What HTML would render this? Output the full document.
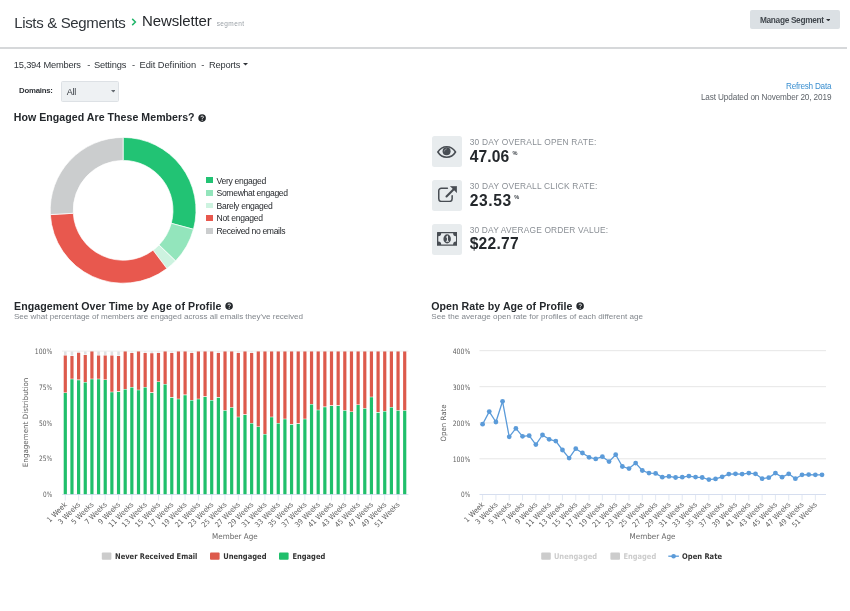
<!DOCTYPE html>
<html lang="en">
<head>
<meta charset="utf-8">
<title>Newsletter segment - engagement report</title>
<style>
html,body{margin:0;padding:0;background:#fff;}
body{width:850px;height:611px;position:relative;overflow:hidden;font-family:"Liberation Sans", sans-serif;-webkit-font-smoothing:antialiased;}
.t{position:absolute;white-space:nowrap;margin:0;padding:0;text-decoration:none;display:block;}
h2.t{font-weight:700;} sup.t{vertical-align:baseline;}
#page{position:absolute;left:0;top:0;width:850px;height:611px;will-change:transform;}
.abs{position:absolute;} .chart{position:absolute;display:block;overflow:visible;}
#btn{left:750.2px;top:10.4px;width:90px;height:18.8px;background:#dbe0e4;border-radius:2px;}
#sel{left:61.2px;top:81.2px;width:56px;height:19.2px;background:#eef1f3;border:1px solid #dde1e5;border-radius:1.5px;}
.ibox{width:30.6px;height:30.4px;left:431.6px;background:#e8ecee;border-radius:2.5px;}
.sw{width:6.4px;height:5.8px;left:206.4px;}
#t_ls{left:14.20px;top:14.12px;font-size:15.0px;line-height:18.0px;font-weight:400;color:#30353a;letter-spacing:-0.341px;}
#t_nl{left:142.00px;top:12.12px;font-size:15.0px;line-height:18.0px;font-weight:400;color:#26292d;letter-spacing:-0.118px;}
#t_seg{left:216.70px;top:20.12px;font-size:6.5px;line-height:7.8px;font-weight:400;color:#9aa0a6;letter-spacing:0.394px;}
#t_btn{left:760.00px;top:16.12px;font-size:8.3px;line-height:9.96px;font-weight:700;color:#41474d;letter-spacing:-0.327px;}
#t_mem{left:13.80px;top:60.12px;font-size:9.3px;line-height:11.16px;font-weight:400;color:#30353a;letter-spacing:-0.197px;}
#t_d1{left:87.20px;top:60.12px;font-size:9.3px;line-height:11.16px;font-weight:400;color:#30353a;letter-spacing:0.000px;}
#t_set{left:93.90px;top:60.12px;font-size:9.3px;line-height:11.16px;font-weight:400;color:#30353a;letter-spacing:-0.171px;}
#t_d2{left:131.90px;top:60.12px;font-size:9.3px;line-height:11.16px;font-weight:400;color:#30353a;letter-spacing:0.000px;}
#t_edit{left:139.50px;top:60.12px;font-size:9.3px;line-height:11.16px;font-weight:400;color:#30353a;letter-spacing:-0.055px;}
#t_d3{left:201.30px;top:60.12px;font-size:9.3px;line-height:11.16px;font-weight:400;color:#30353a;letter-spacing:0.000px;}
#t_rep{left:208.90px;top:60.12px;font-size:9.3px;line-height:11.16px;font-weight:400;color:#30353a;letter-spacing:-0.177px;}
#t_dom{left:19.00px;top:86.12px;font-size:7.8px;line-height:9.36px;font-weight:700;color:#2f3338;letter-spacing:-0.233px;}
#t_all{left:66.70px;top:87.12px;font-size:9.0px;line-height:10.8px;font-weight:400;color:#353a40;letter-spacing:-0.208px;}
#t_ref{left:786.00px;top:82.12px;font-size:8.2px;line-height:9.84px;font-weight:400;color:#3a8fd0;letter-spacing:-0.250px;}
#t_upd{left:700.90px;top:93.12px;font-size:8.2px;line-height:9.84px;font-weight:400;color:#5f646a;letter-spacing:-0.115px;}
#t_h1{left:13.80px;top:111.12px;font-size:10.6px;line-height:12.72px;font-weight:700;color:#24282c;letter-spacing:0.036px;}
#t_h2{left:14.00px;top:300.12px;font-size:10.6px;line-height:12.72px;font-weight:700;color:#24282c;letter-spacing:0.068px;}
#t_s2{left:14.00px;top:312.12px;font-size:8.1px;line-height:9.72px;font-weight:400;color:#82878d;letter-spacing:-0.035px;}
#t_h3{left:431.30px;top:300.12px;font-size:10.6px;line-height:12.72px;font-weight:700;color:#24282c;letter-spacing:0.058px;}
#t_s3{left:431.30px;top:312.12px;font-size:8.1px;line-height:9.72px;font-weight:400;color:#82878d;letter-spacing:-0.001px;}
#t_l1{left:216.50px;top:176.12px;font-size:8.6px;line-height:10.32px;font-weight:400;color:#26292d;letter-spacing:-0.295px;}
#t_l2{left:216.50px;top:188.12px;font-size:8.6px;line-height:10.32px;font-weight:400;color:#26292d;letter-spacing:-0.324px;}
#t_l3{left:216.50px;top:201.12px;font-size:8.6px;line-height:10.32px;font-weight:400;color:#26292d;letter-spacing:-0.300px;}
#t_l4{left:216.50px;top:213.12px;font-size:8.6px;line-height:10.32px;font-weight:400;color:#26292d;letter-spacing:-0.262px;}
#t_l5{left:216.50px;top:226.12px;font-size:8.6px;line-height:10.32px;font-weight:400;color:#26292d;letter-spacing:-0.353px;}
#t_k1{left:469.70px;top:137.12px;font-size:8.4px;line-height:10.08px;font-weight:400;color:#8a8f95;letter-spacing:0.226px;}
#t_v1{left:469.70px;top:148.12px;font-size:15.6px;line-height:18.72px;font-weight:700;color:#24282c;letter-spacing:0.142px;}
#t_p1{left:512.50px;top:150.12px;font-size:5.6px;line-height:6.72px;font-weight:700;color:#3d4349;letter-spacing:0.000px;}
#t_k2{left:469.70px;top:181.12px;font-size:8.4px;line-height:10.08px;font-weight:400;color:#8a8f95;letter-spacing:0.220px;}
#t_v2{left:469.70px;top:192.12px;font-size:15.6px;line-height:18.72px;font-weight:700;color:#24282c;letter-spacing:0.592px;}
#t_p2{left:514.30px;top:194.12px;font-size:5.6px;line-height:6.72px;font-weight:700;color:#3d4349;letter-spacing:0.000px;}
#t_k3{left:469.70px;top:225.12px;font-size:8.4px;line-height:10.08px;font-weight:400;color:#8a8f95;letter-spacing:0.173px;}
#t_v3{left:469.70px;top:235.12px;font-size:15.6px;line-height:18.72px;font-weight:700;color:#24282c;letter-spacing:0.259px;}
</style>
</head>
<body>
<main id="page">
<header>
<a class="t" id="t_ls" href="#">Lists &amp; Segments</a>
<svg class="abs" style="left:130.500px;top:18.300px" width="6" height="8" viewBox="0 0 6 8"><path d="M1.200 0.900L4.400 4 1.200 7.100" fill="none" stroke="#21b56a" stroke-width="1.500"/></svg>
<span class="t" id="t_nl">Newsletter</span>
<small class="t" id="t_seg">segment</small>
<div class="abs" id="btn"></div>
<span class="t" id="t_btn">Manage Segment</span>
<svg class="abs" style="left:825.9px;top:18.5px" width="4.6" height="2.4" viewBox="0 0 10 5"><path d="M0 0h10L5 5z" fill="#2f3338"/></svg>
<svg class="abs" id="rule" style="left:0;top:44px" width="850" height="8" viewBox="0 44 850 8"><path d="M0 48H847" stroke="#c9cbce" stroke-width="1.7" fill="none"/></svg>
</header>
<nav>
<a class="t" id="t_mem" href="#">15,394 Members</a>
<span class="t" id="t_d1">-</span>
<a class="t" id="t_set" href="#">Settings</a>
<span class="t" id="t_d2">-</span>
<a class="t" id="t_edit" href="#">Edit Definition</a>
<span class="t" id="t_d3">-</span>
<a class="t" id="t_rep" href="#">Reports</a>
<svg class="abs" style="left:242.9px;top:63.4px" width="5.1" height="2.6" viewBox="0 0 10 5"><path d="M0 0h10L5 5z" fill="#2f3338"/></svg>
</nav>
<div class="filters">
<label class="t" id="t_dom">Domains:</label>
<div class="abs" id="sel"></div>
<span class="t" id="t_all">All</span>
<svg class="abs" style="left:110.6px;top:90.2px" width="4.6" height="2.5" viewBox="0 0 10 5"><path d="M0 0h10L5 5z" fill="#666c72"/></svg>
<a class="t" id="t_ref" href="#">Refresh Data</a>
<span class="t" id="t_upd">Last Updated on November 20, 2019</span>
</div>
<section id="engaged">
<h2 class="t" id="t_h1">How Engaged Are These Members?</h2>
<span class="abs" style="left:197.8px;top:113.7px;line-height:0"><svg viewBox="0 0 8 8" width="8.2" height="8.2"><circle cx="4" cy="4" r="3.700" fill="#24282c"/><path d="M2.900 3.100a1.150 1.150 0 1 1 1.700 1c-.4.200-.55.400-.55.800" fill="none" stroke="#fff" stroke-width="0.900"/><circle cx="4.050" cy="6" r="0.550" fill="#fff"/></svg></span>
<svg class="chart" id="engagement-donut" style="left:40px;top:130px" width="170" height="162" viewBox="40 130 170 162" role="img" aria-label="Engagement breakdown">
<path d="M123.10 137.40A72.9 72.9 0 0 1 193.48 229.29L171.28 223.30A49.9 49.9 0 0 0 123.10 160.40Z" fill="#22c374" stroke="#fff" stroke-width="0.7" stroke-linejoin="round"/>
<path d="M193.48 229.29A72.9 72.9 0 0 1 175.54 260.94L159.00 244.96A49.9 49.9 0 0 0 171.28 223.30Z" fill="#93e5bc" stroke="#fff" stroke-width="0.7" stroke-linejoin="round"/>
<path d="M175.54 260.94A72.9 72.9 0 0 1 166.87 268.60L153.06 250.20A49.9 49.9 0 0 0 159.00 244.96Z" fill="#cdf3e0" stroke="#fff" stroke-width="0.7" stroke-linejoin="round"/>
<path d="M166.87 268.60A72.9 72.9 0 0 1 50.33 214.62L73.29 213.26A49.9 49.9 0 0 0 153.06 250.20Z" fill="#e8584e" stroke="#fff" stroke-width="0.7" stroke-linejoin="round"/>
<path d="M50.33 214.62A72.9 72.9 0 0 1 123.10 137.40L123.10 160.40A49.9 49.9 0 0 0 73.29 213.26Z" fill="#cbcdce" stroke="#fff" stroke-width="0.7" stroke-linejoin="round"/>
</svg>
<ul style="list-style:none;margin:0;padding:0">
<li><i class="abs sw" style="top:177.3px;background:#22c374"></i><span class="t" id="t_l1">Very engaged</span></li>
<li><i class="abs sw" style="top:189.95px;background:#93e5bc"></i><span class="t" id="t_l2">Somewhat engaged</span></li>
<li><i class="abs sw" style="top:202.6px;background:#cdf3e0"></i><span class="t" id="t_l3">Barely engaged</span></li>
<li><i class="abs sw" style="top:215.25px;background:#e8584e"></i><span class="t" id="t_l4">Not engaged</span></li>
<li><i class="abs sw" style="top:227.9px;background:#cbcdce"></i><span class="t" id="t_l5">Received no emails</span></li>
</ul></section>
<section id="stats">
<div class="abs ibox" style="top:136.3px"></div><svg class="abs" style="left:437.4px;top:145.8px" viewBox="0 0 19.4 12" width="19.4" height="12"><path d="M0.850 6C3.100 2.400 6.100 0.800 9.700 0.800s6.600 1.600 8.850 5.200c-2.250 3.600-5.250 5.200-8.850 5.200S3.100 9.600 0.850 6z" fill="none" stroke="#484d53" stroke-width="1.550" stroke-linejoin="round"/><circle cx="9.600" cy="5.300" r="4" fill="#484d53"/><path d="M7.300 5.100a2.400 2.400 0 0 1 2.200-2.300" fill="none" stroke="#8d9297" stroke-width="0.900" stroke-linecap="round"/></svg>
<span class="t" id="t_k1">30 DAY OVERALL OPEN RATE:</span>
<strong class="t" id="t_v1">47.06</strong>
<sup class="t" id="t_p1">%</sup>
<div class="abs ibox" style="top:180.3px"></div><svg class="abs" style="left:437.7px;top:185.6px" viewBox="0 0 19 16.2" width="19" height="16.2"><path d="M9.400 2.250H3.350A2.600 2.600 0 0 0 0.750 4.850V12.850A2.600 2.600 0 0 0 3.350 15.450H11.550A2.600 2.600 0 0 0 14.150 12.850V9.800" fill="none" stroke="#484d53" stroke-width="1.500" stroke-linecap="round"/><path d="M8.500 10.400L16.500 2.400" stroke="#484d53" stroke-width="2.1" stroke-linecap="round"/><path d="M12.300 0.200H18.800V6.700z" fill="#484d53" stroke="#484d53" stroke-width="0.400" stroke-linejoin="round"/></svg>
<span class="t" id="t_k2">30 DAY OVERALL CLICK RATE:</span>
<strong class="t" id="t_v2">23.53</strong>
<sup class="t" id="t_p2">%</sup>
<div class="abs ibox" style="top:224.3px"></div><svg class="abs" style="left:436.9px;top:232px" viewBox="0 0 20.3 13.8" width="20.3" height="13.8"><path fill-rule="evenodd" fill="#484d53" d="M0.400 0H19.900a.4.400 0 0 1 .4.400V13.400a.4.400 0 0 1-.4.400H0.400a.4.400 0 0 1-.4-.4V0.400A.4.400 0 0 1 .4 0zM4.200 1.300A2.900 2.900 0 0 1 1.300 4.200V9.600A2.900 2.900 0 0 1 4.200 12.500H16.100A2.900 2.900 0 0 1 19 9.600V4.200A2.900 2.900 0 0 1 16.100 1.300z"/><ellipse cx="10.150" cy="6.900" rx="3.750" ry="4.550" fill="#484d53"/><path d="M9.100 5.300l1.350-1v4.600M8.900 9.300h3" fill="none" stroke="#e8ecee" stroke-width="1.050"/></svg>
<span class="t" id="t_k3">30 DAY AVERAGE ORDER VALUE:</span>
<strong class="t" id="t_v3">$22.77</strong>
</section>
<section id="engagement-over-time">
<h2 class="t" id="t_h2">Engagement Over Time by Age of Profile</h2>
<span class="abs" style="left:224.5px;top:302.4px;line-height:0"><svg viewBox="0 0 8 8" width="8.2" height="8.2"><circle cx="4" cy="4" r="3.700" fill="#24282c"/><path d="M2.900 3.100a1.150 1.150 0 1 1 1.700 1c-.4.200-.55.400-.55.800" fill="none" stroke="#fff" stroke-width="0.900"/><circle cx="4.050" cy="6" r="0.550" fill="#fff"/></svg></span>
<p class="t" id="t_s2">See what percentage of members are engaged across all emails they've received</p>
<svg class="chart" id="engagement-chart" style="left:0;top:338px" width="425" height="236" viewBox="0 338 425 236" role="img" aria-label="Engagement over time by age of profile">
<g font-family='"DejaVu Sans", "Liberation Sans", sans-serif'>
<path d="M62 351.1H408.5" stroke="#e6e6e6" stroke-width="0.7" fill="none"/>
<text x="52.20" y="497.00" font-size="7.4" fill="#5f5f5f" text-anchor="end" textLength="9.1" lengthAdjust="spacingAndGlyphs">0%</text>
<text x="52.20" y="461.00" font-size="7.4" fill="#5f5f5f" text-anchor="end" textLength="13.2" lengthAdjust="spacingAndGlyphs">25%</text>
<text x="52.20" y="426.00" font-size="7.4" fill="#5f5f5f" text-anchor="end" textLength="13.2" lengthAdjust="spacingAndGlyphs">50%</text>
<text x="52.20" y="390.00" font-size="7.4" fill="#5f5f5f" text-anchor="end" textLength="13.2" lengthAdjust="spacingAndGlyphs">75%</text>
<text x="52.20" y="354.00" font-size="7.4" fill="#5f5f5f" text-anchor="end" textLength="17.4" lengthAdjust="spacingAndGlyphs">100%</text>
<text x="27.90" y="422.40" font-size="7.3" fill="#5f5f5f" text-anchor="middle" textLength="89.5" lengthAdjust="spacingAndGlyphs" transform="rotate(-90 27.90 422.40)">Engagement Distribution</text>
<path class="s-never" fill="#dfe0e1" d="M64.00 355.1V351.40000000000003h2.6V355.1zM70.66 355.6V351.40000000000003h2.6V355.6zM77.31 352.2V351.40000000000003h2.6V352.2zM83.97 354.6V351.40000000000003h2.6V354.6zM90.62 351.0V351.40000000000003h2.6V351.0zM97.27 355.1V351.40000000000003h2.6V355.1zM103.93 355.1V351.40000000000003h2.6V355.1zM110.58 355.1V351.40000000000003h2.6V355.1zM117.24 355.6V351.40000000000003h2.6V355.6zM123.89 351.0V351.40000000000003h2.6V351.0zM130.55 352.4V351.40000000000003h2.6V352.4zM137.21 351.0V351.40000000000003h2.6V351.0zM143.86 352.4V351.40000000000003h2.6V352.4zM150.52 352.7V351.40000000000003h2.6V352.7zM157.17 352.4V351.40000000000003h2.6V352.4zM163.83 351.0V351.40000000000003h2.6V351.0zM170.48 352.4V351.40000000000003h2.6V352.4zM177.14 351.0V351.40000000000003h2.6V351.0zM183.79 351.0V351.40000000000003h2.6V351.0zM190.45 352.4V351.40000000000003h2.6V352.4zM197.10 351.0V351.40000000000003h2.6V351.0zM203.76 351.0V351.40000000000003h2.6V351.0zM210.41 351.0V351.40000000000003h2.6V351.0zM217.07 352.4V351.40000000000003h2.6V352.4zM223.72 351.0V351.40000000000003h2.6V351.0zM230.38 351.0V351.40000000000003h2.6V351.0zM237.03 352.4V351.40000000000003h2.6V352.4zM243.69 351.0V351.40000000000003h2.6V351.0zM250.34 352.4V351.40000000000003h2.6V352.4zM257.00 351.0V351.40000000000003h2.6V351.0zM263.65 351.0V351.40000000000003h2.6V351.0zM270.31 351.0V351.40000000000003h2.6V351.0zM276.96 351.0V351.40000000000003h2.6V351.0zM283.62 351.0V351.40000000000003h2.6V351.0zM290.27 351.0V351.40000000000003h2.6V351.0zM296.93 351.0V351.40000000000003h2.6V351.0zM303.58 351.0V351.40000000000003h2.6V351.0zM310.24 351.0V351.40000000000003h2.6V351.0zM316.89 351.0V351.40000000000003h2.6V351.0zM323.55 351.0V351.40000000000003h2.6V351.0zM330.20 351.0V351.40000000000003h2.6V351.0zM336.86 351.0V351.40000000000003h2.6V351.0zM343.51 351.0V351.40000000000003h2.6V351.0zM350.17 351.0V351.40000000000003h2.6V351.0zM356.82 351.0V351.40000000000003h2.6V351.0zM363.48 351.0V351.40000000000003h2.6V351.0zM370.13 351.0V351.40000000000003h2.6V351.0zM376.79 351.0V351.40000000000003h2.6V351.0zM383.44 351.0V351.40000000000003h2.6V351.0zM390.10 351.0V351.40000000000003h2.6V351.0zM396.75 351.0V351.40000000000003h2.6V351.0zM403.41 351.0V351.40000000000003h2.6V351.0z"/>
<path class="s-unengaged" fill="#dd5a4c" d="M63.70 392.5V355.6h3.2V392.5zM70.36 378.7V356.1h3.2V378.7zM77.01 379.6V352.7h3.2V379.6zM83.67 382.0V355.1h3.2V382.0zM90.32 378.7V351.5h3.2V378.7zM96.97 378.7V355.6h3.2V378.7zM103.63 379.4V355.6h3.2V379.4zM110.28 391.7V355.6h3.2V391.7zM116.94 391.3V356.1h3.2V391.3zM123.59 388.9V351.5h3.2V388.9zM130.25 386.9V352.9h3.2V386.9zM136.91 389.7V351.5h3.2V389.7zM143.56 386.9V352.9h3.2V386.9zM150.22 392.3V353.2h3.2V392.3zM156.87 381.5V352.9h3.2V381.5zM163.53 384.0V351.5h3.2V384.0zM170.18 397.1V352.9h3.2V397.1zM176.84 398.7V351.5h3.2V398.7zM183.49 394.6V351.5h3.2V394.6zM190.15 400.0V352.9h3.2V400.0zM196.80 398.7V351.5h3.2V398.7zM203.46 396.3V351.5h3.2V396.3zM210.11 400.0V351.5h3.2V400.0zM216.77 397.1V352.9h3.2V397.1zM223.42 410.2V351.5h3.2V410.2zM230.08 407.2V351.5h3.2V407.2zM236.73 416.7V352.9h3.2V416.7zM243.39 414.3V351.5h3.2V414.3zM250.04 422.9V352.9h3.2V422.9zM256.69 426.5V351.5h3.2V426.5zM263.35 433.9V351.5h3.2V433.9zM270.00 416.7V351.5h3.2V416.7zM276.66 422.9V351.5h3.2V422.9zM283.31 418.7V351.5h3.2V418.7zM289.97 424.1V351.5h3.2V424.1zM296.62 423.3V351.5h3.2V423.3zM303.28 418.7V351.5h3.2V418.7zM309.94 403.9V351.5h3.2V403.9zM316.59 409.7V351.5h3.2V409.7zM323.25 406.6V351.5h3.2V406.6zM329.90 405.3V351.5h3.2V405.3zM336.56 405.3V351.5h3.2V405.3zM343.21 410.2V351.5h3.2V410.2zM349.87 411.5V351.5h3.2V411.5zM356.52 404.4V351.5h3.2V404.4zM363.18 408.2V351.5h3.2V408.2zM369.83 396.7V351.5h3.2V396.7zM376.49 412.1V351.5h3.2V412.1zM383.14 411.0V351.5h3.2V411.0zM389.80 406.9V351.5h3.2V406.9zM396.45 410.2V351.5h3.2V410.2zM403.11 410.2V351.5h3.2V410.2z"/>
<path class="s-engaged" fill="#20bf6b" d="M63.70 494.5V393.1h3.2V494.5zM70.36 494.5V379.3h3.2V494.5zM77.01 494.5V380.2h3.2V494.5zM83.67 494.5V382.6h3.2V494.5zM90.32 494.5V379.3h3.2V494.5zM96.97 494.5V379.3h3.2V494.5zM103.63 494.5V380.0h3.2V494.5zM110.28 494.5V392.3h3.2V494.5zM116.94 494.5V391.9h3.2V494.5zM123.59 494.5V389.5h3.2V494.5zM130.25 494.5V387.5h3.2V494.5zM136.91 494.5V390.3h3.2V494.5zM143.56 494.5V387.5h3.2V494.5zM150.22 494.5V392.9h3.2V494.5zM156.87 494.5V382.1h3.2V494.5zM163.53 494.5V384.6h3.2V494.5zM170.18 494.5V397.7h3.2V494.5zM176.84 494.5V399.3h3.2V494.5zM183.49 494.5V395.2h3.2V494.5zM190.15 494.5V400.6h3.2V494.5zM196.80 494.5V399.3h3.2V494.5zM203.46 494.5V396.9h3.2V494.5zM210.11 494.5V400.6h3.2V494.5zM216.77 494.5V397.7h3.2V494.5zM223.42 494.5V410.8h3.2V494.5zM230.08 494.5V407.8h3.2V494.5zM236.73 494.5V417.3h3.2V494.5zM243.39 494.5V414.9h3.2V494.5zM250.04 494.5V423.5h3.2V494.5zM256.69 494.5V427.1h3.2V494.5zM263.35 494.5V434.5h3.2V494.5zM270.00 494.5V417.3h3.2V494.5zM276.66 494.5V423.5h3.2V494.5zM283.31 494.5V419.3h3.2V494.5zM289.97 494.5V424.7h3.2V494.5zM296.62 494.5V423.9h3.2V494.5zM303.28 494.5V419.3h3.2V494.5zM309.94 494.5V404.5h3.2V494.5zM316.59 494.5V410.3h3.2V494.5zM323.25 494.5V407.2h3.2V494.5zM329.90 494.5V405.9h3.2V494.5zM336.56 494.5V405.9h3.2V494.5zM343.21 494.5V410.8h3.2V494.5zM349.87 494.5V412.1h3.2V494.5zM356.52 494.5V405.0h3.2V494.5zM363.18 494.5V408.8h3.2V494.5zM369.83 494.5V397.3h3.2V494.5zM376.49 494.5V412.7h3.2V494.5zM383.14 494.5V411.6h3.2V494.5zM389.80 494.5V407.5h3.2V494.5zM396.45 494.5V410.8h3.2V494.5zM403.11 494.5V410.8h3.2V494.5z"/>
<path d="M62 494.5H408.5" stroke="#ccd6eb" stroke-width="0.7" fill="none"/>
<path d="M65.30 494.5v6M78.61 494.5v6M91.92 494.5v6M105.23 494.5v6M118.54 494.5v6M131.85 494.5v6M145.16 494.5v6M158.47 494.5v6M171.78 494.5v6M185.09 494.5v6M198.40 494.5v6M211.71 494.5v6M225.02 494.5v6M238.33 494.5v6M251.64 494.5v6M264.95 494.5v6M278.26 494.5v6M291.57 494.5v6M304.88 494.5v6M318.19 494.5v6M331.50 494.5v6M344.81 494.5v6M358.12 494.5v6M371.43 494.5v6M384.74 494.5v6M398.05 494.5v6" stroke="#d6deee" stroke-width="0.7" fill="none"/>
<text x="67.50" y="505.00" font-size="7.3" fill="#5f5f5f" text-anchor="end" textLength="25.0" lengthAdjust="spacingAndGlyphs" transform="rotate(-45 67.50 505.00)">1 Week</text>
<text x="80.81" y="505.00" font-size="7.3" fill="#5f5f5f" text-anchor="end" textLength="28.0" lengthAdjust="spacingAndGlyphs" transform="rotate(-45 80.81 505.00)">3 Weeks</text>
<text x="94.12" y="505.00" font-size="7.3" fill="#5f5f5f" text-anchor="end" textLength="28.0" lengthAdjust="spacingAndGlyphs" transform="rotate(-45 94.12 505.00)">5 Weeks</text>
<text x="107.43" y="505.00" font-size="7.3" fill="#5f5f5f" text-anchor="end" textLength="28.0" lengthAdjust="spacingAndGlyphs" transform="rotate(-45 107.43 505.00)">7 Weeks</text>
<text x="120.74" y="505.00" font-size="7.3" fill="#5f5f5f" text-anchor="end" textLength="28.0" lengthAdjust="spacingAndGlyphs" transform="rotate(-45 120.74 505.00)">9 Weeks</text>
<text x="134.05" y="505.00" font-size="7.3" fill="#5f5f5f" text-anchor="end" textLength="32.0" lengthAdjust="spacingAndGlyphs" transform="rotate(-45 134.05 505.00)">11 Weeks</text>
<text x="147.36" y="505.00" font-size="7.3" fill="#5f5f5f" text-anchor="end" textLength="32.0" lengthAdjust="spacingAndGlyphs" transform="rotate(-45 147.36 505.00)">13 Weeks</text>
<text x="160.67" y="505.00" font-size="7.3" fill="#5f5f5f" text-anchor="end" textLength="32.0" lengthAdjust="spacingAndGlyphs" transform="rotate(-45 160.67 505.00)">15 Weeks</text>
<text x="173.98" y="505.00" font-size="7.3" fill="#5f5f5f" text-anchor="end" textLength="32.0" lengthAdjust="spacingAndGlyphs" transform="rotate(-45 173.98 505.00)">17 Weeks</text>
<text x="187.29" y="505.00" font-size="7.3" fill="#5f5f5f" text-anchor="end" textLength="32.0" lengthAdjust="spacingAndGlyphs" transform="rotate(-45 187.29 505.00)">19 Weeks</text>
<text x="200.60" y="505.00" font-size="7.3" fill="#5f5f5f" text-anchor="end" textLength="32.0" lengthAdjust="spacingAndGlyphs" transform="rotate(-45 200.60 505.00)">21 Weeks</text>
<text x="213.91" y="505.00" font-size="7.3" fill="#5f5f5f" text-anchor="end" textLength="32.0" lengthAdjust="spacingAndGlyphs" transform="rotate(-45 213.91 505.00)">23 Weeks</text>
<text x="227.22" y="505.00" font-size="7.3" fill="#5f5f5f" text-anchor="end" textLength="32.0" lengthAdjust="spacingAndGlyphs" transform="rotate(-45 227.22 505.00)">25 Weeks</text>
<text x="240.53" y="505.00" font-size="7.3" fill="#5f5f5f" text-anchor="end" textLength="32.0" lengthAdjust="spacingAndGlyphs" transform="rotate(-45 240.53 505.00)">27 Weeks</text>
<text x="253.84" y="505.00" font-size="7.3" fill="#5f5f5f" text-anchor="end" textLength="32.0" lengthAdjust="spacingAndGlyphs" transform="rotate(-45 253.84 505.00)">29 Weeks</text>
<text x="267.15" y="505.00" font-size="7.3" fill="#5f5f5f" text-anchor="end" textLength="32.0" lengthAdjust="spacingAndGlyphs" transform="rotate(-45 267.15 505.00)">31 Weeks</text>
<text x="280.46" y="505.00" font-size="7.3" fill="#5f5f5f" text-anchor="end" textLength="32.0" lengthAdjust="spacingAndGlyphs" transform="rotate(-45 280.46 505.00)">33 Weeks</text>
<text x="293.77" y="505.00" font-size="7.3" fill="#5f5f5f" text-anchor="end" textLength="32.0" lengthAdjust="spacingAndGlyphs" transform="rotate(-45 293.77 505.00)">35 Weeks</text>
<text x="307.08" y="505.00" font-size="7.3" fill="#5f5f5f" text-anchor="end" textLength="32.0" lengthAdjust="spacingAndGlyphs" transform="rotate(-45 307.08 505.00)">37 Weeks</text>
<text x="320.39" y="505.00" font-size="7.3" fill="#5f5f5f" text-anchor="end" textLength="32.0" lengthAdjust="spacingAndGlyphs" transform="rotate(-45 320.39 505.00)">39 Weeks</text>
<text x="333.70" y="505.00" font-size="7.3" fill="#5f5f5f" text-anchor="end" textLength="32.0" lengthAdjust="spacingAndGlyphs" transform="rotate(-45 333.70 505.00)">41 Weeks</text>
<text x="347.01" y="505.00" font-size="7.3" fill="#5f5f5f" text-anchor="end" textLength="32.0" lengthAdjust="spacingAndGlyphs" transform="rotate(-45 347.01 505.00)">43 Weeks</text>
<text x="360.32" y="505.00" font-size="7.3" fill="#5f5f5f" text-anchor="end" textLength="32.0" lengthAdjust="spacingAndGlyphs" transform="rotate(-45 360.32 505.00)">45 Weeks</text>
<text x="373.63" y="505.00" font-size="7.3" fill="#5f5f5f" text-anchor="end" textLength="32.0" lengthAdjust="spacingAndGlyphs" transform="rotate(-45 373.63 505.00)">47 Weeks</text>
<text x="386.94" y="505.00" font-size="7.3" fill="#5f5f5f" text-anchor="end" textLength="32.0" lengthAdjust="spacingAndGlyphs" transform="rotate(-45 386.94 505.00)">49 Weeks</text>
<text x="400.25" y="505.00" font-size="7.3" fill="#5f5f5f" text-anchor="end" textLength="32.0" lengthAdjust="spacingAndGlyphs" transform="rotate(-45 400.25 505.00)">51 Weeks</text>
<text x="234.90" y="538.90" font-size="7.8" fill="#666" text-anchor="middle" textLength="45.7" lengthAdjust="spacingAndGlyphs">Member Age</text>
<rect x="101.8" y="552.4" width="9.6" height="7.4" rx="1" fill="#cccccc"/>
<text x="115.00" y="559.00" font-size="7.8" fill="#333" font-weight="700" textLength="82.4" lengthAdjust="spacingAndGlyphs">Never Received Email</text>
<rect x="210.0" y="552.4" width="9.6" height="7.4" rx="1" fill="#dd5a4c"/>
<text x="223.20" y="559.00" font-size="7.8" fill="#333" font-weight="700" textLength="43.3" lengthAdjust="spacingAndGlyphs">Unengaged</text>
<rect x="279.0" y="552.4" width="9.6" height="7.4" rx="1" fill="#20bf6b"/>
<text x="292.40" y="559.00" font-size="7.8" fill="#333" font-weight="700" textLength="32.9" lengthAdjust="spacingAndGlyphs">Engaged</text>
</g></svg>
</section>
<section id="open-rate">
<h2 class="t" id="t_h3">Open Rate by Age of Profile</h2>
<span class="abs" style="left:575.75px;top:302.4px;line-height:0"><svg viewBox="0 0 8 8" width="8.2" height="8.2"><circle cx="4" cy="4" r="3.700" fill="#24282c"/><path d="M2.900 3.100a1.150 1.150 0 1 1 1.700 1c-.4.200-.55.400-.55.800" fill="none" stroke="#fff" stroke-width="0.900"/><circle cx="4.050" cy="6" r="0.550" fill="#fff"/></svg></span>
<p class="t" id="t_s3">See the average open rate for profiles of each different age</p>
<svg class="chart" id="openrate-chart" style="left:425px;top:338px" width="425" height="236" viewBox="425 338 425 236" role="img" aria-label="Open rate by age of profile">
<g font-family='"DejaVu Sans", "Liberation Sans", sans-serif'>
<path d="M479.5 350.7H826M479.5 386.7H826M479.5 422.9H826M479.5 458.8H826" stroke="#e6e6e6" stroke-width="1" fill="none"/>
<text x="470.30" y="354.00" font-size="7.4" fill="#5f5f5f" text-anchor="end" textLength="17.6" lengthAdjust="spacingAndGlyphs">400%</text>
<text x="470.30" y="390.00" font-size="7.4" fill="#5f5f5f" text-anchor="end" textLength="17.6" lengthAdjust="spacingAndGlyphs">300%</text>
<text x="470.30" y="426.00" font-size="7.4" fill="#5f5f5f" text-anchor="end" textLength="17.6" lengthAdjust="spacingAndGlyphs">200%</text>
<text x="470.30" y="462.00" font-size="7.4" fill="#5f5f5f" text-anchor="end" textLength="17.6" lengthAdjust="spacingAndGlyphs">100%</text>
<text x="470.30" y="497.00" font-size="7.4" fill="#5f5f5f" text-anchor="end" textLength="9.2" lengthAdjust="spacingAndGlyphs">0%</text>
<text x="445.90" y="423.00" font-size="7.3" fill="#5f5f5f" text-anchor="middle" textLength="37.0" lengthAdjust="spacingAndGlyphs" transform="rotate(-90 445.90 423.00)">Open Rate</text>
<path d="M479.5 494.5H826" stroke="#ccd6eb" stroke-width="0.8" fill="none"/>
<path d="M482.60 494.5v6M495.91 494.5v6M509.22 494.5v6M522.53 494.5v6M535.84 494.5v6M549.15 494.5v6M562.46 494.5v6M575.77 494.5v6M589.08 494.5v6M602.39 494.5v6M615.70 494.5v6M629.01 494.5v6M642.32 494.5v6M655.63 494.5v6M668.94 494.5v6M682.25 494.5v6M695.56 494.5v6M708.87 494.5v6M722.18 494.5v6M735.49 494.5v6M748.80 494.5v6M762.11 494.5v6M775.42 494.5v6M788.73 494.5v6M802.04 494.5v6M815.35 494.5v6" stroke="#d6deee" stroke-width="0.7" fill="none"/>
<text x="484.80" y="505.00" font-size="7.3" fill="#5f5f5f" text-anchor="end" textLength="25.0" lengthAdjust="spacingAndGlyphs" transform="rotate(-45 484.80 505.00)">1 Week</text>
<text x="498.11" y="505.00" font-size="7.3" fill="#5f5f5f" text-anchor="end" textLength="28.0" lengthAdjust="spacingAndGlyphs" transform="rotate(-45 498.11 505.00)">3 Weeks</text>
<text x="511.42" y="505.00" font-size="7.3" fill="#5f5f5f" text-anchor="end" textLength="28.0" lengthAdjust="spacingAndGlyphs" transform="rotate(-45 511.42 505.00)">5 Weeks</text>
<text x="524.73" y="505.00" font-size="7.3" fill="#5f5f5f" text-anchor="end" textLength="28.0" lengthAdjust="spacingAndGlyphs" transform="rotate(-45 524.73 505.00)">7 Weeks</text>
<text x="538.04" y="505.00" font-size="7.3" fill="#5f5f5f" text-anchor="end" textLength="28.0" lengthAdjust="spacingAndGlyphs" transform="rotate(-45 538.04 505.00)">9 Weeks</text>
<text x="551.35" y="505.00" font-size="7.3" fill="#5f5f5f" text-anchor="end" textLength="32.0" lengthAdjust="spacingAndGlyphs" transform="rotate(-45 551.35 505.00)">11 Weeks</text>
<text x="564.66" y="505.00" font-size="7.3" fill="#5f5f5f" text-anchor="end" textLength="32.0" lengthAdjust="spacingAndGlyphs" transform="rotate(-45 564.66 505.00)">13 Weeks</text>
<text x="577.97" y="505.00" font-size="7.3" fill="#5f5f5f" text-anchor="end" textLength="32.0" lengthAdjust="spacingAndGlyphs" transform="rotate(-45 577.97 505.00)">15 Weeks</text>
<text x="591.28" y="505.00" font-size="7.3" fill="#5f5f5f" text-anchor="end" textLength="32.0" lengthAdjust="spacingAndGlyphs" transform="rotate(-45 591.28 505.00)">17 Weeks</text>
<text x="604.59" y="505.00" font-size="7.3" fill="#5f5f5f" text-anchor="end" textLength="32.0" lengthAdjust="spacingAndGlyphs" transform="rotate(-45 604.59 505.00)">19 Weeks</text>
<text x="617.90" y="505.00" font-size="7.3" fill="#5f5f5f" text-anchor="end" textLength="32.0" lengthAdjust="spacingAndGlyphs" transform="rotate(-45 617.90 505.00)">21 Weeks</text>
<text x="631.21" y="505.00" font-size="7.3" fill="#5f5f5f" text-anchor="end" textLength="32.0" lengthAdjust="spacingAndGlyphs" transform="rotate(-45 631.21 505.00)">23 Weeks</text>
<text x="644.52" y="505.00" font-size="7.3" fill="#5f5f5f" text-anchor="end" textLength="32.0" lengthAdjust="spacingAndGlyphs" transform="rotate(-45 644.52 505.00)">25 Weeks</text>
<text x="657.83" y="505.00" font-size="7.3" fill="#5f5f5f" text-anchor="end" textLength="32.0" lengthAdjust="spacingAndGlyphs" transform="rotate(-45 657.83 505.00)">27 Weeks</text>
<text x="671.14" y="505.00" font-size="7.3" fill="#5f5f5f" text-anchor="end" textLength="32.0" lengthAdjust="spacingAndGlyphs" transform="rotate(-45 671.14 505.00)">29 Weeks</text>
<text x="684.45" y="505.00" font-size="7.3" fill="#5f5f5f" text-anchor="end" textLength="32.0" lengthAdjust="spacingAndGlyphs" transform="rotate(-45 684.45 505.00)">31 Weeks</text>
<text x="697.76" y="505.00" font-size="7.3" fill="#5f5f5f" text-anchor="end" textLength="32.0" lengthAdjust="spacingAndGlyphs" transform="rotate(-45 697.76 505.00)">33 Weeks</text>
<text x="711.07" y="505.00" font-size="7.3" fill="#5f5f5f" text-anchor="end" textLength="32.0" lengthAdjust="spacingAndGlyphs" transform="rotate(-45 711.07 505.00)">35 Weeks</text>
<text x="724.38" y="505.00" font-size="7.3" fill="#5f5f5f" text-anchor="end" textLength="32.0" lengthAdjust="spacingAndGlyphs" transform="rotate(-45 724.38 505.00)">37 Weeks</text>
<text x="737.69" y="505.00" font-size="7.3" fill="#5f5f5f" text-anchor="end" textLength="32.0" lengthAdjust="spacingAndGlyphs" transform="rotate(-45 737.69 505.00)">39 Weeks</text>
<text x="751.00" y="505.00" font-size="7.3" fill="#5f5f5f" text-anchor="end" textLength="32.0" lengthAdjust="spacingAndGlyphs" transform="rotate(-45 751.00 505.00)">41 Weeks</text>
<text x="764.31" y="505.00" font-size="7.3" fill="#5f5f5f" text-anchor="end" textLength="32.0" lengthAdjust="spacingAndGlyphs" transform="rotate(-45 764.31 505.00)">43 Weeks</text>
<text x="777.62" y="505.00" font-size="7.3" fill="#5f5f5f" text-anchor="end" textLength="32.0" lengthAdjust="spacingAndGlyphs" transform="rotate(-45 777.62 505.00)">45 Weeks</text>
<text x="790.93" y="505.00" font-size="7.3" fill="#5f5f5f" text-anchor="end" textLength="32.0" lengthAdjust="spacingAndGlyphs" transform="rotate(-45 790.93 505.00)">47 Weeks</text>
<text x="804.24" y="505.00" font-size="7.3" fill="#5f5f5f" text-anchor="end" textLength="32.0" lengthAdjust="spacingAndGlyphs" transform="rotate(-45 804.24 505.00)">49 Weeks</text>
<text x="817.55" y="505.00" font-size="7.3" fill="#5f5f5f" text-anchor="end" textLength="32.0" lengthAdjust="spacingAndGlyphs" transform="rotate(-45 817.55 505.00)">51 Weeks</text>
<polyline points="482.60,424.2 489.25,411.6 495.91,422.0 502.56,401.3 509.22,436.8 515.88,428.4 522.53,436.3 529.19,435.7 535.84,444.6 542.50,435.0 549.15,439.3 555.81,441.1 562.46,450.0 569.12,458.1 575.77,448.7 582.43,453.0 589.08,457.3 595.74,458.9 602.39,456.7 609.05,461.6 615.70,454.7 622.36,466.5 629.01,468.6 635.66,463.1 642.32,470.5 648.98,473.1 655.63,473.4 662.29,477.2 668.94,476.4 675.60,477.5 682.25,477.2 688.90,476.1 695.56,477.1 702.22,477.5 708.87,479.6 715.53,478.9 722.18,476.8 728.84,474.1 735.49,473.8 742.14,474.1 748.80,473.1 755.46,473.8 762.11,478.7 768.77,477.7 775.42,473.1 782.08,477.2 788.73,473.8 795.38,478.7 802.04,474.8 808.70,474.6 815.35,474.8 822.01,474.8" fill="none" stroke="#5b9bd9" stroke-width="1.3" stroke-linejoin="round"/>
<g fill="#5b9bd9"><circle cx="482.60" cy="424.2" r="2.4"/><circle cx="489.25" cy="411.6" r="2.4"/><circle cx="495.91" cy="422.0" r="2.4"/><circle cx="502.56" cy="401.3" r="2.4"/><circle cx="509.22" cy="436.8" r="2.4"/><circle cx="515.88" cy="428.4" r="2.4"/><circle cx="522.53" cy="436.3" r="2.4"/><circle cx="529.19" cy="435.7" r="2.4"/><circle cx="535.84" cy="444.6" r="2.4"/><circle cx="542.50" cy="435.0" r="2.4"/><circle cx="549.15" cy="439.3" r="2.4"/><circle cx="555.81" cy="441.1" r="2.4"/><circle cx="562.46" cy="450.0" r="2.4"/><circle cx="569.12" cy="458.1" r="2.4"/><circle cx="575.77" cy="448.7" r="2.4"/><circle cx="582.43" cy="453.0" r="2.4"/><circle cx="589.08" cy="457.3" r="2.4"/><circle cx="595.74" cy="458.9" r="2.4"/><circle cx="602.39" cy="456.7" r="2.4"/><circle cx="609.05" cy="461.6" r="2.4"/><circle cx="615.70" cy="454.7" r="2.4"/><circle cx="622.36" cy="466.5" r="2.4"/><circle cx="629.01" cy="468.6" r="2.4"/><circle cx="635.66" cy="463.1" r="2.4"/><circle cx="642.32" cy="470.5" r="2.4"/><circle cx="648.98" cy="473.1" r="2.4"/><circle cx="655.63" cy="473.4" r="2.4"/><circle cx="662.29" cy="477.2" r="2.4"/><circle cx="668.94" cy="476.4" r="2.4"/><circle cx="675.60" cy="477.5" r="2.4"/><circle cx="682.25" cy="477.2" r="2.4"/><circle cx="688.90" cy="476.1" r="2.4"/><circle cx="695.56" cy="477.1" r="2.4"/><circle cx="702.22" cy="477.5" r="2.4"/><circle cx="708.87" cy="479.6" r="2.4"/><circle cx="715.53" cy="478.9" r="2.4"/><circle cx="722.18" cy="476.8" r="2.4"/><circle cx="728.84" cy="474.1" r="2.4"/><circle cx="735.49" cy="473.8" r="2.4"/><circle cx="742.14" cy="474.1" r="2.4"/><circle cx="748.80" cy="473.1" r="2.4"/><circle cx="755.46" cy="473.8" r="2.4"/><circle cx="762.11" cy="478.7" r="2.4"/><circle cx="768.77" cy="477.7" r="2.4"/><circle cx="775.42" cy="473.1" r="2.4"/><circle cx="782.08" cy="477.2" r="2.4"/><circle cx="788.73" cy="473.8" r="2.4"/><circle cx="795.38" cy="478.7" r="2.4"/><circle cx="802.04" cy="474.8" r="2.4"/><circle cx="808.70" cy="474.6" r="2.4"/><circle cx="815.35" cy="474.8" r="2.4"/><circle cx="822.01" cy="474.8" r="2.4"/></g>
<text x="652.50" y="538.90" font-size="7.8" fill="#666" text-anchor="middle" textLength="45.8" lengthAdjust="spacingAndGlyphs">Member Age</text>
<rect x="541.2" y="552.4" width="9.6" height="7.4" rx="1" fill="#cccccc"/>
<text x="553.90" y="559.00" font-size="7.8" fill="#cccccc" font-weight="700" textLength="43.2" lengthAdjust="spacingAndGlyphs">Unengaged</text>
<rect x="610.4" y="552.4" width="9.6" height="7.4" rx="1" fill="#cccccc"/>
<text x="623.40" y="559.00" font-size="7.8" fill="#cccccc" font-weight="700" textLength="32.8" lengthAdjust="spacingAndGlyphs">Engaged</text>
<path d="M668.3 556.2H678.9" stroke="#5b9bd9" stroke-width="1.3"/><circle cx="673.6" cy="556.2" r="2.3" fill="#5b9bd9"/>
<text x="682.10" y="559.00" font-size="7.8" fill="#333" font-weight="700" textLength="39.9" lengthAdjust="spacingAndGlyphs">Open Rate</text>
</g></svg>
</section>
</main>
</body>
</html>
